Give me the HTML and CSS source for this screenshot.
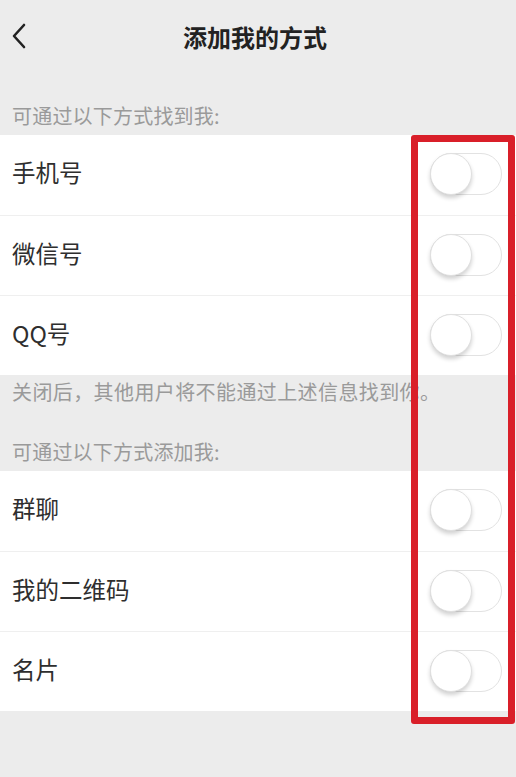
FILE: index.html
```html
<!DOCTYPE html>
<html lang="zh-CN">
<head>
  <meta charset="UTF-8" />
  <meta name="viewport" content="width=device-width, initial-scale=1" />
  <title>添加我的方式</title>

  <link rel="stylesheet" href="styles.css">
</head>
<body>
  <header class="nav-bar">
    <svg class="back-icon" xmlns="http://www.w3.org/2000/svg" viewBox="0 0 16 26">
      <path d="M13 2L3 13l10 11" stroke-width="2.6" stroke-linecap="round" stroke-linejoin="round" fill="none"/>
    </svg>
    <h1>添加我的方式</h1>
  </header>

  <p class="section-label">可通过以下方式找到我:</p>
  <ul class="option-list">
    <li><span>手机号</span><span class="switch"></span></li>
    <li><span>微信号</span><span class="switch"></span></li>
    <li><span>QQ号</span><span class="switch"></span></li>
  </ul>
  <p class="note">关闭后，其他用户将不能通过上述信息找到你。</p>

  <p class="section-label second">可通过以下方式添加我:</p>
  <ul class="option-list">
    <li><span>群聊</span><span class="switch"></span></li>
    <li><span>我的二维码</span><span class="switch"></span></li>
    <li><span>名片</span><span class="switch"></span></li>
  </ul>

  <div class="highlight-box"></div>
</body>
</html>
```

FILE: styles.css
```css
body {
  font-family: "Noto Sans CJK SC", "Noto Sans", sans-serif;
  background-color: #ececec;
  color: #333;
  margin: 0;
  height: 777px;
  position: relative;
  overflow: hidden;
}

.nav-bar {
  height: 74px;
  display: flex;
  align-items: center;
  justify-content: center;
  position: relative;
}

.back-icon {
  position: absolute;
  left: 11px;
  top: 23px;
  width: 16px;
  height: 26px;
  stroke: #222;
}

.nav-bar h1 {
  margin: 0 6px 0 0;
  font-size: 24px;
  font-weight: bold;
  color: #222;
  line-height: 24px;
}

.section-label {
  margin: 0;
  padding: 30px 12px 7px;
  font-size: 20px;
  line-height: 24px;
  color: #9a9a9a;
  letter-spacing: 0.2px;
}

.section-label.second {
  padding-top: 36px;
}

.note {
  margin: 0;
  padding: 5px 12px 0;
  font-size: 20px;
  line-height: 24px;
  color: #9a9a9a;
  letter-spacing: 0.4px;
}

.option-list {
  list-style: none;
  margin: 0;
  padding: 0;
  background-color: #fff;
}

.option-list li {
  height: 79px;
  display: flex;
  align-items: center;
  justify-content: space-between;
  padding: 0 14px 0 12px;
  font-size: 23.5px;
  color: #2e2e2e;
}

.option-list li span:first-child {
  position: relative;
  top: -3px;
}

.option-list li + li {
  border-top: 1px solid #efefef;
}

.option-list li:first-child {
  height: 80px;
}

.switch {
  width: 70px;
  height: 40px;
  border: 1px solid #e2e2e2;
  border-radius: 22px;
  background-color: #fff;
  position: relative;
  top: -1px;
}

.switch::before {
  content: "";
  position: absolute;
  left: -1px;
  top: -1px;
  width: 40px;
  height: 40px;
  border-radius: 50%;
  background-color: #fff;
  border: 1px solid #e0e0e0;
  box-shadow: 0 3px 4px rgba(0, 0, 0, 0.18);
}

.highlight-box {
  position: absolute;
  left: 411px;
  top: 135px;
  width: 90px;
  height: 575px;
  border: 7px solid #d91f29;
  border-radius: 3px;
}
```
